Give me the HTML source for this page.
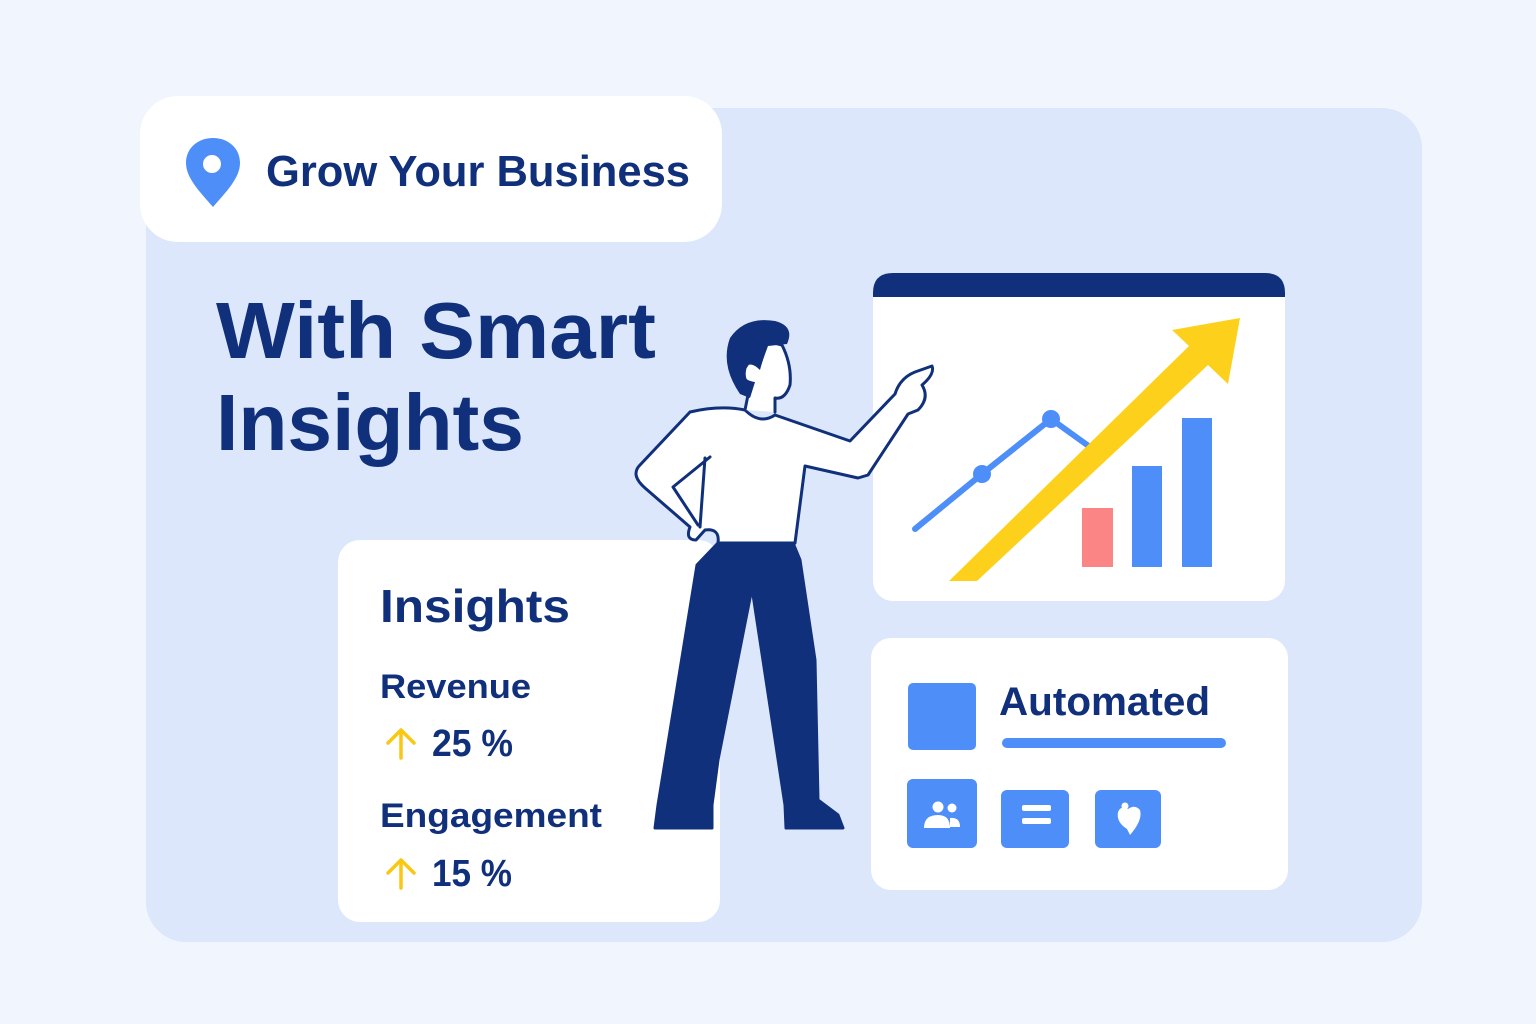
<!DOCTYPE html>
<html><head><meta charset="utf-8"><style>
body{margin:0;width:1536px;height:1024px;overflow:hidden;background:#f1f6fe;font-family:"Liberation Sans",sans-serif}
svg{position:absolute;left:0;top:0}
</style></head><body>
<svg width="1536" height="1024" viewBox="0 0 1536 1024">
<rect x="146" y="108" width="1276" height="834" rx="40" fill="#dce7fb"/>
<rect x="140" y="96" width="582" height="146" rx="38" fill="#fff"/>
<path d="M213 207 C200 192 186 178 186 163 C186 148 198 138 213 138 C228 138 240 148 240 163 C240 178 226 192 213 207Z" fill="#4d8ef8"/>
<circle cx="212" cy="164" r="9" fill="#fff"/>
<text x="266" y="186" font-size="44" font-weight="bold" fill="#11307b" textLength="424" lengthAdjust="spacingAndGlyphs">Grow Your Business</text>
<text x="216" y="358" font-size="80" font-weight="bold" fill="#11307b" textLength="440" lengthAdjust="spacingAndGlyphs">With Smart</text>
<text x="216" y="450" font-size="80" font-weight="bold" fill="#11307b" textLength="308" lengthAdjust="spacingAndGlyphs">Insights</text>
<!-- insights card -->
<rect x="338" y="540" width="382" height="382" rx="22" fill="#fff"/>
<text x="380" y="622" font-size="46" font-weight="bold" fill="#11307b" textLength="190" lengthAdjust="spacingAndGlyphs">Insights</text>
<text x="380" y="698" font-size="34" font-weight="bold" fill="#11307b" textLength="151" lengthAdjust="spacingAndGlyphs">Revenue</text>
<text x="432" y="756" font-size="38" font-weight="bold" fill="#11307b" textLength="81" lengthAdjust="spacingAndGlyphs">25 %</text>
<text x="380" y="827" font-size="34" font-weight="bold" fill="#11307b" textLength="222" lengthAdjust="spacingAndGlyphs">Engagement</text>
<text x="432" y="886" font-size="38" font-weight="bold" fill="#11307b" textLength="80" lengthAdjust="spacingAndGlyphs">15 %</text>
<g stroke="#f8c814" stroke-width="3.5" fill="none" stroke-linecap="round" stroke-linejoin="round">
<path d="M401 758 V730 M388 743 L401 730 L414 743"/>
<path d="M401 888 V860 M388 873 L401 860 L414 873"/>
</g>
<!-- chart card -->
<rect x="873" y="273" width="412" height="328" rx="20" fill="#fff"/>
<path d="M873 293 Q873 273 893 273 H1265 Q1285 273 1285 293 V297 H873Z" fill="#11307b"/>
<polyline points="915,529 982,474 1051,419 1090,447" fill="none" stroke="#4d8ef8" stroke-width="6" stroke-linecap="round"/>
<circle cx="982" cy="474" r="9" fill="#4d8ef8"/><circle cx="1051" cy="419" r="9" fill="#4d8ef8"/>
<rect x="1082" y="508" width="31" height="59" fill="#fb8585"/>
<rect x="1132" y="466" width="30" height="101" fill="#4d8ef8"/>
<rect x="1182" y="418" width="30" height="149" fill="#4d8ef8"/>
<path d="M949 581 L977 581 L1208 365 L1228 384 L1240 318 L1172 330 L1189 346 Z" fill="#fdd11b"/>
<!-- automated card -->
<rect x="871" y="638" width="417" height="252" rx="20" fill="#fff"/>
<rect x="908" y="683" width="68" height="67" rx="5" fill="#4d8ef8"/>
<text x="999" y="715" font-size="40" font-weight="bold" fill="#11307b" textLength="211" lengthAdjust="spacingAndGlyphs">Automated</text>
<rect x="1002" y="738" width="224" height="10" rx="5" fill="#4d8ef8"/>
<rect x="907" y="779" width="70" height="69" rx="6" fill="#4d8ef8"/>
<rect x="1001" y="790" width="68" height="58" rx="6" fill="#4d8ef8"/>
<rect x="1095" y="790" width="66" height="58" rx="6" fill="#4d8ef8"/>
<g fill="#fff">
<circle cx="938" cy="807" r="5.5"/><path d="M924 828 Q924 815 938 815 Q950 815 950 828Z"/>
<circle cx="952" cy="808" r="4.5"/><path d="M950 827 V818 Q960 817 960 827Z"/>
<rect x="1022" y="805" width="29" height="6" rx="2"/><rect x="1022" y="818" width="29" height="6" rx="2"/>
<path d="M1130 835 L1127 829 Q1116 822 1118 812 Q1121 805 1128 809 Q1135 804 1140 810 Q1143 820 1130 835Z"/>
<circle cx="1125" cy="806" r="3.5"/>
</g>
<!-- person -->
<g stroke="#11307b" stroke-width="3" stroke-linejoin="round" stroke-linecap="round">
<path d="M718 543 L793 543 L800 560 L815 660 L818 800 L838 815 L843 828 L786 828 L785 805 L752 588 L718 760 L712 805 L712 828 L655 828 L658 805 L697 565 Z" fill="#11307b"/>
<path d="M745 410 Q760 425 775 415 L850 441 L895 394 Q900 378 915 372 L932 366 Q935 374 922 385 Q930 398 918 410 L908 414 L868 475 L858 478 L805 466 L795 543 L718 543 Q720 528 705 530 L696 540 Q685 540 690 527 L645 488 Q630 475 640 465 L690 412 Q720 405 745 410 Z" fill="#fff"/>
<path d="M710 457 L673 487 L698 525 M705 458 L700 527" fill="none"/>
<path d="M745 410 L750 385 Q742 380 745 368 L750 360 Q750 345 762 340 L782 345 Q792 365 790 385 Q785 400 775 398 L775 412" fill="#fff"/>
</g>
<path d="M740 394 Q720 365 730 338 Q745 316 775 321 Q795 326 787 344 L768 346 Q762 362 760 370 Q750 360 745 368 Q740 380 755 382 L750 398 Z" fill="#11307b"/>
</svg>
</body></html>
